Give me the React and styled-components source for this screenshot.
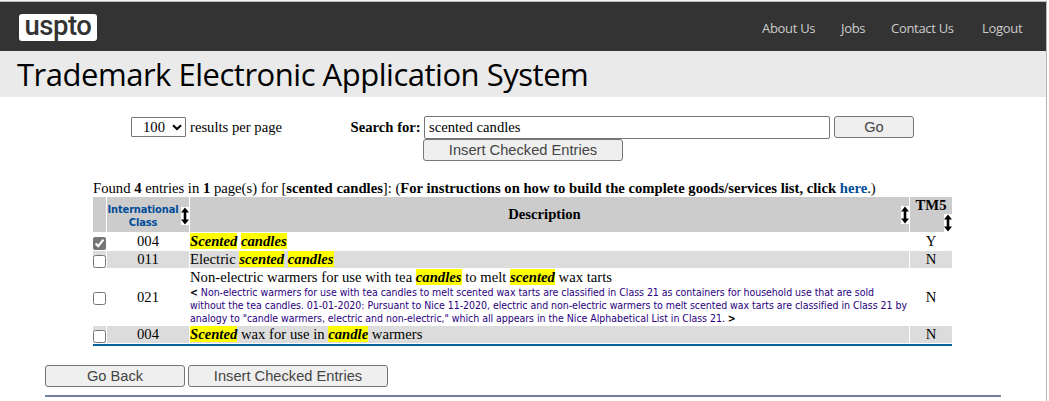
import React from "react";
import styled, { createGlobalStyle } from "styled-components";

const GlobalStyle = createGlobalStyle`
  * { box-sizing: border-box; }
  body { margin: 0; background: #fff; color: #000; overflow: hidden;
    font-family: "Liberation Serif", "Times New Roman", serif; font-size: 14.67px; }
`;

const Frame = styled.div`
  height: 401px;
  width: 1047px;
  border-top: 1px solid #f4f4f4;
  border-right: 1px solid #b8b8b8;
`;
const TopBar = styled.header`
  height: 50px;
  border-top: 1px solid #b9bcbc;
  background: #333;
  display: flex;
  justify-content: space-between;
  padding: 12px 23px 0 19px;
`;
const Logo = styled.div`
  width: 78px;
  height: 27px;
  border-radius: 3px;
  background: #fff;
  color: #333;
  font: 500 27.5px/24px Roboto, sans-serif;
  letter-spacing: -0.5px;
  text-align: center;
`;
const Nav = styled.nav`
  display: flex;
  font: 13px/18px "Open Sans", sans-serif;
  height: 18px;
  margin-top: 5px;
`;
const NavLink = styled.a`
  color: #ccc;
  white-space: nowrap;
  letter-spacing: -0.3px;
  width: ${(p) => p.$width}px;
`;
const TitleBar = styled.h1`
  margin: 0;
  height: 46px;
  background: #eaeaea;
  padding-left: 17px;
  font: 400 31px/47px "Open Sans", sans-serif;
  letter-spacing: -0.48px;
  white-space: nowrap;
`;
const SearchArea = styled.form`
  display: flex;
  align-items: flex-start;
  margin-top: 19px;
  padding-left: 131px;
  height: 65px;
  line-height: 22px;
  white-space: nowrap;
`;
const PageSize = styled.label`
  display: flex;
  align-items: center;
  gap: 4px;
  width: 219px;
  height: 22px;
`;
const Select = styled.div`
  width: 55px;
  height: 20px;
  border: 1px solid #767676;
  border-radius: 1px;
  display: flex;
  align-items: center;
  justify-content: space-between;
  padding: 0 3px 0 11px;
`;
const SearchLabel = styled.b`
  width: 73px;
  padding-left: 0.6px;
`;
const SearchFields = styled.div`
  display: flex;
  flex-direction: column;
`;
const SearchLine = styled.div`
  display: flex;
  gap: 4px;
  height: 23px;
  padding-left: 1px;
`;
const Input = styled.input`
  width: 406px;
  height: 23px;
  border: 1px solid #767676;
  border-radius: 2px;
  padding: 0 4px;
  color: #000;
  background: #fff;
  font: inherit;
`;
const Button = styled.button`
  width: ${(p) => p.$width}px;
  height: 22px;
  padding: 0;
  border: 1px solid #767676;
  border-radius: 3px;
  background: #efefef;
  color: #444;
  font: 14.67px/18px "Liberation Sans", Arial, sans-serif;
`;
const Summary = styled.p`
  margin: 0;
  padding-left: 93px;
  height: 16px;
  line-height: 14px;
  white-space: nowrap;
`;
const Link = styled.a`
  color: #004d99;
`;
const Table = styled.div`
  display: grid;
  row-gap: 1px;
  width: 859px;
  margin-left: 93px;
  padding-bottom: 1px;
  border-bottom: 2px solid #00649a;
`;
const Row = styled.div`
  display: grid;
  grid-template-columns: 13px 82px 719px 42px;
  column-gap: 1px;
  height: ${(p) => p.$height || 17}px;
`;
const Cell = styled.div`
  background: ${(p) => p.$fill || "transparent"};
  display: flex;
  align-items: center;
  justify-content: ${(p) => (p.$left ? "flex-start" : "center")};
  line-height: 17px;
  white-space: pre;
`;
const HeadCell = styled(Cell)`
  background: #ccc;
  font-weight: bold;
`;
const HeadTitle = styled.span`
  flex: 1;
  text-align: center;
  padding-right: 2px;
`;
const ClassTitle = styled.a`
  flex: 1;
  text-align: center;
  color: #004d99;
  font: bold 11px/13px "DejaVu Sans Condensed", "DejaVu Sans", sans-serif;
  font-stretch: condensed;
  letter-spacing: -0.15px;
  padding: 3px 2px 0 0;
`;
const Tm5Head = styled(HeadCell)`
  flex-direction: column;
  justify-content: space-between;
`;
const ArrowBox = styled.span`
  background: #fff;
  width: 8px;
  height: 18px;
  display: flex;
  flex: none;
  align-self: ${(p) => (p.$end ? "flex-end" : "center")};
  margin-top: ${(p) => p.$shift || 0}px;
`;
const CheckCell = styled(Cell)`
  align-items: ${(p) => (p.$tall ? "center" : "flex-end")};
  padding-top: ${(p) => (p.$tall ? 3 : 0)}px;
`;
const Check = styled.input`
  margin: 0;
  width: 13px;
  height: 13px;
  accent-color: #767676;
`;
const Mark = styled.mark`
  background: #ff0;
  font-weight: bold;
  font-style: italic;
`;
const Text = styled.span`
  letter-spacing: 0.01px;
`;
const Details = styled.div`
  display: flex;
  flex-direction: column;
`;
const Note = styled.div`
  color: #2a0080;
  font: 10.5px/13px "DejaVu Sans Condensed", "DejaVu Sans", sans-serif;
  font-stretch: condensed;
  letter-spacing: -0.035px;
`;
const Bracket = styled.b`
  color: #000;
`;
const Footer = styled.footer`
  display: flex;
  gap: 3px;
  width: 956px;
  height: 32px;
  margin: 19px 0 0 45px;
  border-bottom: 2px solid #7280a0;
`;

function SortArrow(props) {
  return (
    <ArrowBox {...props}>
      <svg width="8" height="18" viewBox="0 0 8 18">
        <path d="M4 .5 8 5.5H5.3V12.5H8L4 17.5 0 12.5H2.7V5.5H0Z" fill="#000" />
      </svg>
    </ArrowBox>
  );
}

const GREY = "#dcdcdc";

function Entry({ code, tm5, fill, checked, height, children }) {
  return (
    <Row $height={height}>
      <CheckCell $fill={fill} $tall={!!height}>
        <Check type="checkbox" defaultChecked={checked} />
      </CheckCell>
      <Cell $fill={fill}>{code}</Cell>
      <Cell $fill={fill} $left>{children}</Cell>
      <Cell $fill={fill}>{tm5}</Cell>
    </Row>
  );
}

export default function App() {
  return (
    <Frame>
      <GlobalStyle />
      <TopBar>
        <Logo>uspto</Logo>
        <Nav>
          <NavLink $width={79}>About Us</NavLink>
          <NavLink $width={50}>Jobs</NavLink>
          <NavLink $width={91}>Contact Us</NavLink>
          <NavLink $width={41}>Logout</NavLink>
        </Nav>
      </TopBar>
      <TitleBar>Trademark Electronic Application System</TitleBar>
      <SearchArea>
        <PageSize>
          <Select>
            100
            <svg width="10" height="7" viewBox="0 0 10 7">
              <path d="M1 1.2 5 5 9 1.2" fill="none" stroke="#000" strokeWidth="2" />
            </svg>
          </Select>
          results per page
        </PageSize>
        <SearchLabel>Search for:</SearchLabel>
        <SearchFields>
          <SearchLine>
            <Input defaultValue="scented candles" />
            <Button type="button" $width={80}>Go</Button>
          </SearchLine>
          <Button type="button" $width={200}>Insert Checked Entries</Button>
        </SearchFields>
      </SearchArea>
      <Summary>
        Found <b>4</b> entries in <b>1</b> page(s) for [<b>scented candles</b>]: (
        <b>For instructions on how to build the complete goods/services list, click <Link>here</Link></b>.)
      </Summary>
      <Table>
        <Row $height={35}>
          <HeadCell />
          <HeadCell>
            <ClassTitle>International{"\n"}Class</ClassTitle>
            <SortArrow $shift={3} />
          </HeadCell>
          <HeadCell>
            <HeadTitle>Description</HeadTitle>
            <SortArrow $shift={1} />
          </HeadCell>
          <Tm5Head>
            TM5
            <SortArrow $end />
          </Tm5Head>
        </Row>
        <Entry code="004" tm5="Y" checked>
          <Text><Mark>Scented</Mark> <Mark>candles</Mark></Text>
        </Entry>
        <Entry code="011" tm5="N" fill={GREY}>
          <Text>Electric <Mark>scented</Mark> <Mark>candles</Mark></Text>
        </Entry>
        <Entry code="021" tm5="N" height={56}>
          <Details>
            <Text>Non-electric warmers for use with tea <Mark>candles</Mark> to melt <Mark>scented</Mark> wax tarts</Text>
            <Note>
              <Bracket>&lt;</Bracket> Non-electric warmers for use with tea candles to melt scented wax tarts are classified in Class 21 as containers for household use that are sold{"\n"}
              without the tea candles. 01-01-2020: Pursuant to Nice 11-2020, electric and non-electric warmers to melt scented wax tarts are classified in Class 21 by{"\n"}
              analogy to "candle warmers, electric and non-electric," which all appears in the Nice Alphabetical List in Class 21. <Bracket>&gt;</Bracket>
            </Note>
          </Details>
        </Entry>
        <Entry code="004" tm5="N" fill={GREY}>
          <Text><Mark>Scented</Mark> wax for use in <Mark>candle</Mark> warmers</Text>
        </Entry>
      </Table>
      <Footer>
        <Button type="button" $width={140}>Go Back</Button>
        <Button type="button" $width={200}>Insert Checked Entries</Button>
      </Footer>
    </Frame>
  );
}
